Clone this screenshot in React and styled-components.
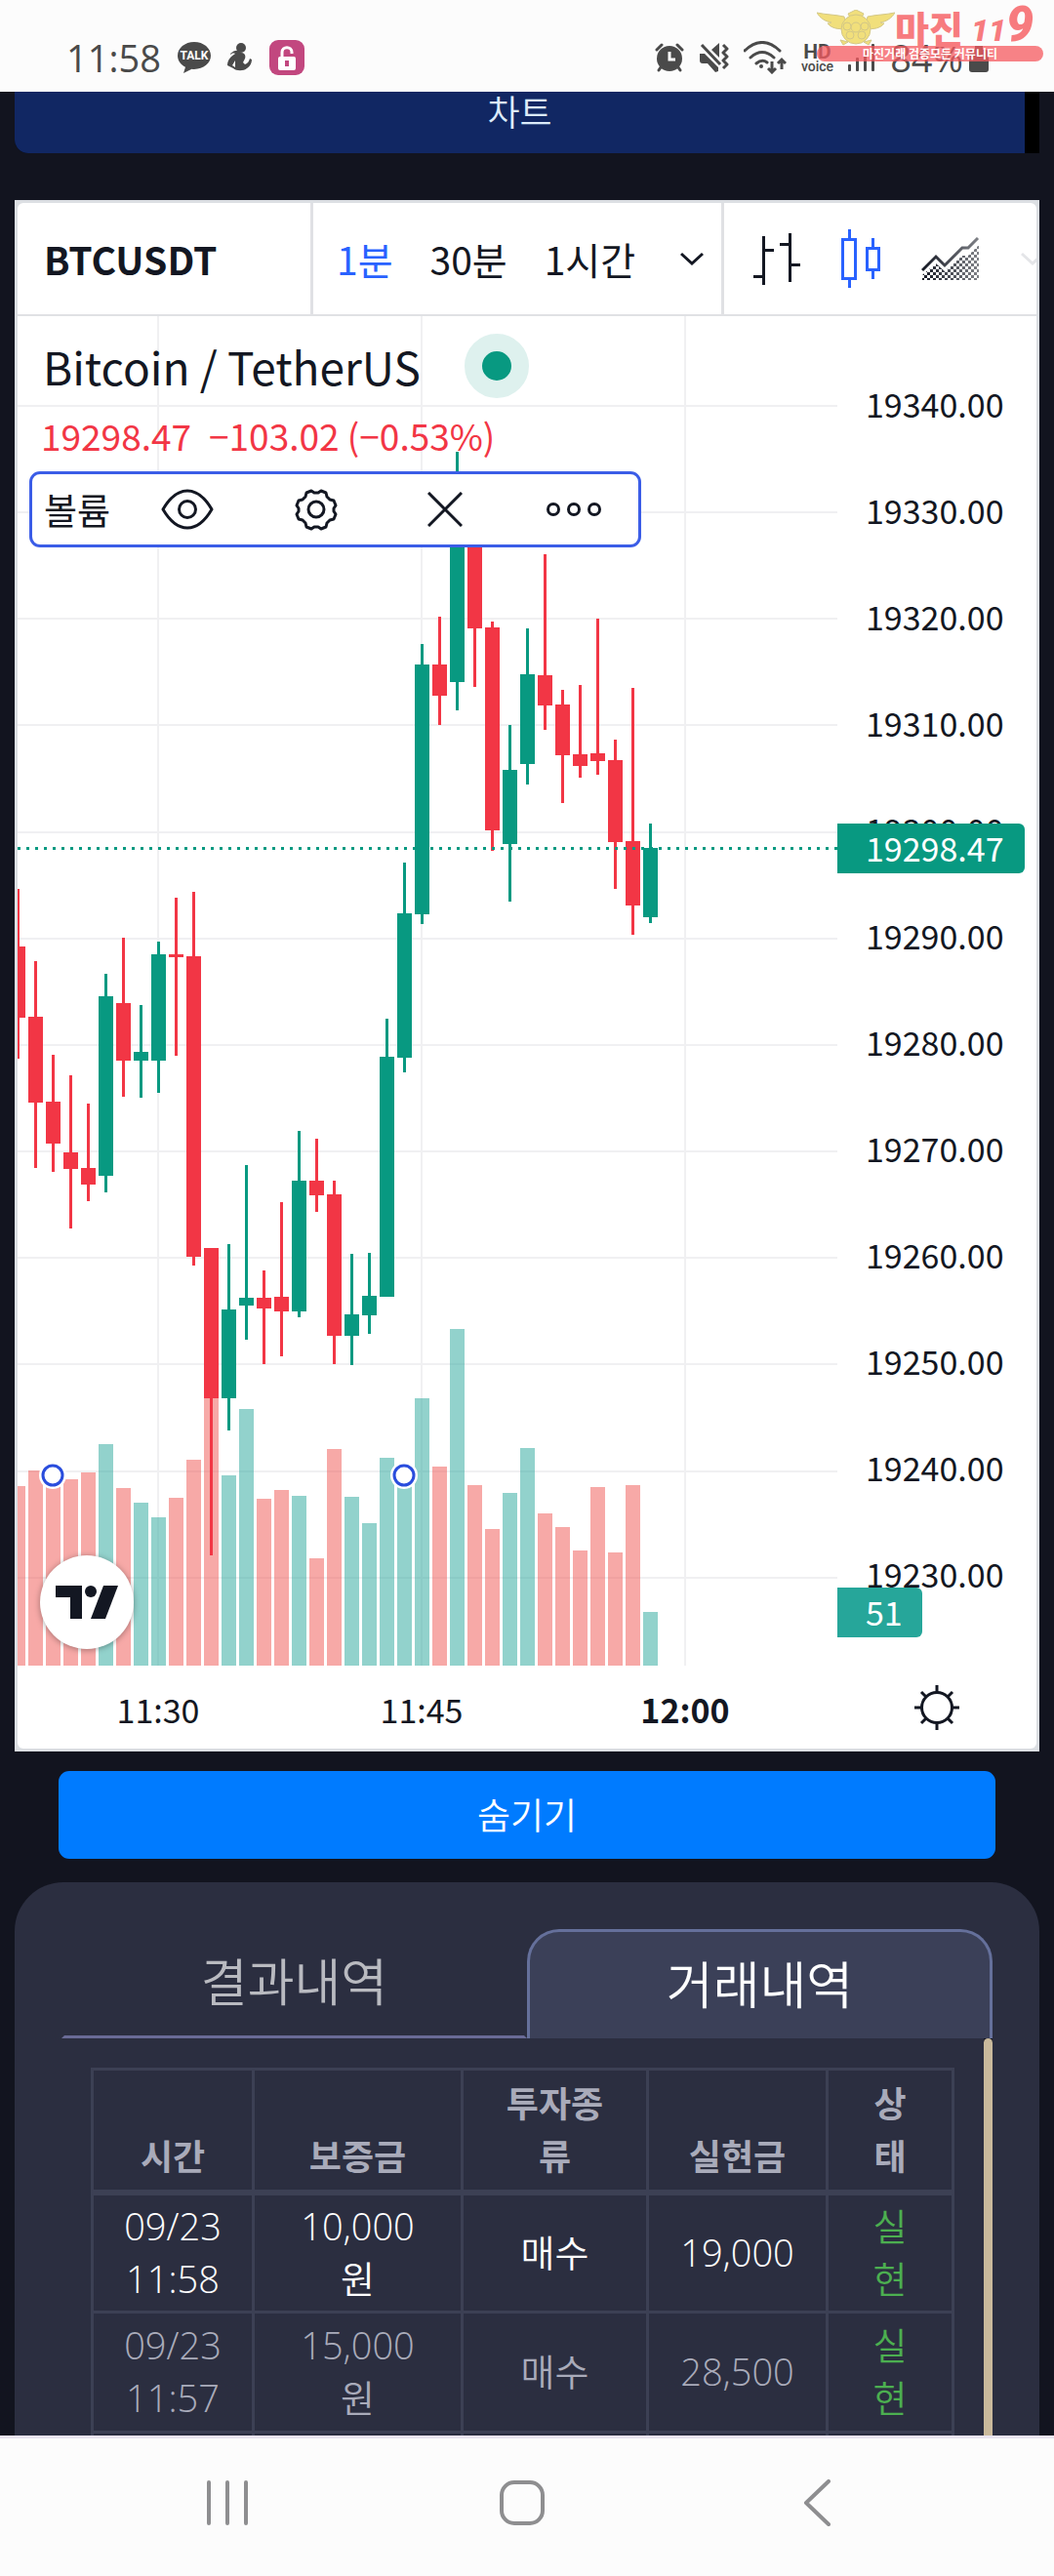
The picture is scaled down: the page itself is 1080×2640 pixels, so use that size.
import React, { useState } from "react";

//styled-components
import styled, { createGlobalStyle } from "styled-components";

const GREEN = "#089981";
const RED = "#f23645";

//Chart data, in plot pixels: [up, high, bodyTop, bodyBottom, low, volumeTop]
const candles = [
  [0, 587, 646, 719, 761, 1199],
  [0, 661, 718, 806, 873, 1183],
  [0, 757, 805, 848, 877, 1189],
  [0, 778, 857, 874, 935, 1192],
  [0, 807, 873, 890, 907, 1185],
  [1, 674, 697, 881, 898, 1156],
  [0, 637, 704, 763, 800, 1201],
  [1, 706, 754, 763, 801, 1216],
  [1, 641, 654, 763, 796, 1231],
  [0, 596, 654, 657, 758, 1211],
  [0, 590, 656, 964, 973, 1172],
  [0, 955, 955, 1109, 1270, 1109],
  [1, 951, 1018, 1109, 1142, 1188],
  [1, 870, 1006, 1014, 1049, 1120],
  [0, 978, 1006, 1017, 1074, 1212],
  [0, 908, 1005, 1020, 1066, 1203],
  [1, 835, 886, 1020, 1026, 1209],
  [0, 843, 886, 901, 918, 1273],
  [0, 886, 900, 1045, 1074, 1161],
  [1, 961, 1023, 1045, 1075, 1210],
  [1, 960, 1004, 1024, 1043, 1237],
  [1, 720, 759, 1005, 1005, 1170],
  [1, 560, 612, 760, 775, 1189],
  [1, 336, 357, 613, 623, 1109],
  [0, 308, 357, 389, 419, 1179],
  [1, 139, 210, 375, 404, 1038],
  [0, 190, 200, 320, 380, 1198],
  [0, 313, 319, 527, 548, 1243],
  [1, 419, 465, 541, 600, 1206],
  [1, 320, 367, 459, 480, 1160],
  [0, 244, 368, 399, 424, 1227],
  [0, 383, 398, 450, 499, 1241],
  [0, 378, 449, 461, 473, 1265],
  [0, 310, 448, 456, 470, 1200],
  [0, 434, 455, 539, 587, 1267],
  [0, 381, 538, 604, 634, 1198],
  [1, 520, 545, 616, 622, 1328],
];

const prices = [
  "19340.00",
  "19330.00",
  "19320.00",
  "19310.00",
  "19300.00",
  "19290.00",
  "19280.00",
  "19270.00",
  "19260.00",
  "19250.00",
  "19240.00",
  "19230.00",
];

const trades = [
  { day: "09/23", time: "11:58", deposit: "10,000", kind: "매수", profit: "19,000", state: "실현" },
  { day: "09/23", time: "11:57", deposit: "15,000", kind: "매수", profit: "28,500", state: "실현" },
];

const Plot = () => (
  <PlotSvg viewBox="0 0 840 1383" preserveAspectRatio="xMaxYMin slice">
    {prices.map((price, i) => (
      <rect key={price} x="0" y={91 + Math.round(i * 109.15)} width="840" height="2" fill="#f0f0f2" />
    ))}
    {[143, 413, 683].map((x) => (
      <rect key={x} x={x} y="0" width="2" height="1383" fill="#f0f0f2" />
    ))}
    {candles.map(([up, , , , , top], i) => (
      <rect
        key={i}
        x={i * 18 - 7}
        y={top}
        width="15"
        height={1383 - top}
        fill={up ? "#26a69a" : "#ef5350"}
        opacity="0.5"
      />
    ))}
    {candles.map(([up, high, top, bottom, low], i) => (
      <g key={i} fill={up ? GREEN : RED}>
        <rect x={i * 18 - 1} y={high} width="3" height={low - high} />
        <rect x={i * 18 - 7} y={top} width="15" height={bottom - top} />
      </g>
    ))}
    <path d="M0 545.5H840" stroke={GREEN} strokeWidth="3" strokeDasharray="3 6" />
    {[36, 396].map((x) => (
      <g key={x}>
        <circle cx={x} cy="1188" r="14" fill="#fff" />
        <circle cx={x} cy="1188" r="10" fill="#fff" stroke="#2a4ddd" strokeWidth="3" />
      </g>
    ))}
  </PlotSvg>
);

const StatusBar = () => (
  <Status>
    <Clock>11:58</Clock>
    <svg width="34" height="32" viewBox="0 0 34 32">
      <path
        d="M17 0C7.500 0 0 6.300 0 14c0 5 3 9.300 8 11.800L6 32l8.500-4.300c.8.1 1.700.2 2.500.2 9.500 0 17-6.200 17-13.900S26.500 0 17 0z"
        fill="#4a4a4a"
      />
      <text x="17" y="18" textAnchor="middle" fontSize="12" fontWeight="700" fontFamily="Roboto, sans-serif" fill="#fff">
        TALK
      </text>
    </svg>
    <svg width="26" height="30" viewBox="0 0 26 30" fill="#4a4a4a">
      <circle cx="14" cy="5" r="5" />
      <path d="M3 11c3-3 6-4 9-3l2 2c4 0 5 3 4 6l-2 4 2 2c3-1 4-3 5-6l2 1c0 4-2 7-5 9-3 3-11 3-14 0l-6-3c0-5 3-9 8-12-2-1-4 0-5 1z" />
      <path d="M8 18l-3 5 3 2z" fill="#fff" />
    </svg>
    <LockBadge>
      <svg width="20" height="25" viewBox="0 0 20 25">
        <path d="M5 12V6.500C5 0 15 0 15 6.500V8" fill="none" stroke="#fff" strokeWidth="3" />
        <rect x="1" y="11" width="18" height="14" rx="2" fill="#fff" />
        <rect x="8" y="15" width="4" height="6" fill="#c2477f" />
      </svg>
    </LockBadge>
    <StatusRight>
      <svg width="30" height="30" viewBox="0 0 30 30">
        <g stroke="#4a4a4a" strokeWidth="3" strokeLinecap="round">
          <path d="M2 7l5-5M28 7l-5-5M6 25l-2 3M24 25l2 3" />
        </g>
        <circle cx="15" cy="16" r="13" fill="#4a4a4a" />
        <path d="M15 9v8h6" fill="none" stroke="#fff" strokeWidth="3" />
      </svg>
      <svg width="31" height="30" viewBox="0 0 31 30">
        <path d="M1 11h5L20 25v4l-3 1-8-9H4c-2 0-3-1-3-3zM13 7l8-7v15z" fill="#4a4a4a" />
        <path
          d="M3 2l19 20M25 2l4 4-4 4 4 4-4 4 4 4-4 4"
          fill="none"
          stroke="#4a4a4a"
          strokeWidth="3"
          strokeLinejoin="round"
        />
      </svg>
      <svg width="44" height="34" viewBox="0 0 44 34" fill="none" stroke="#4a4a4a" strokeWidth="3">
        <path d="M1 10Q19-7 37 10M7 17q12-11 24 0M13 23q6-5 11-1" strokeLinecap="round" />
        <circle cx="18" cy="26" r="2" fill="#4a4a4a" stroke="none" />
        <path d="M29 21v10M25 28l4 4 4-4M39 29V19M35 23l4-4 4 4" />
      </svg>
      <HdVoice>
        <b>HD</b>
        <span>voice</span>
      </HdVoice>
      <svg width="28" height="28" viewBox="0 0 28 28" fill="#4a4a4a">
        <rect x="0" y="21" width="3" height="7" rx="1" />
        <rect x="8" y="14" width="3" height="14" rx="1" />
        <rect x="16" y="7" width="3" height="21" rx="1" />
        <rect x="24" y="0" width="3" height="28" rx="1" />
      </svg>
      <Charge>
        84%
        <svg width="20" height="30" viewBox="0 0 20 30" fill="#4a4a4a">
          <rect x="6" y="3" width="8" height="5" />
          <rect x="0" y="7" width="20" height="23" rx="3" />
        </svg>
      </Charge>
    </StatusRight>
    <Watermark>
      <WatermarkTop>
        <svg width="80" height="37" viewBox="0 0 80 37">
          <g fill="#f0dc6e" stroke="#cfc27a" strokeWidth="1" opacity="0.9">
            <path d="M0 3c9 2 19 2 28 4l3 12c-10 2-17-1-20-5 3 0 4-1 4-1-7-1-12-5-15-10z" />
            <path d="M80 3c-9 2-19 2-28 4l-3 12c10 2 17-1 20-5-3 0-4-1-4-1 7-1 12-5 15-10z" />
            <path d="M32 4l8-4 8 4-3 6H35z" />
            <circle cx="40" cy="20" r="15" />
            <circle cx="40" cy="18" r="5" />
            <circle cx="31" cy="17" r="4" />
            <circle cx="49" cy="17" r="4" />
            <circle cx="34" cy="26" r="4" />
            <circle cx="46" cy="26" r="4" />
            <path d="M24 31l8 2-5 3zM56 31l-8 2 5 3z" />
          </g>
        </svg>
        <WatermarkName>마진</WatermarkName>
        <WatermarkNumber>
          11<big>9</big>
        </WatermarkNumber>
      </WatermarkTop>
      <WatermarkBar>마진거래 검증모든 커뮤니티</WatermarkBar>
    </Watermark>
  </Status>
);

const Chevron = () => (
  <svg width="24" height="14" viewBox="0 0 24 14" fill="none" stroke="currentColor" strokeWidth="3">
    <path d="M1 2l11 10L23 2" />
  </svg>
);

const ChartWidget = () => {
  const [period, setPeriod] = useState("1분");

  return (
    <Widget>
      <Toolbar>
        <SymbolButton>BTCUSDT</SymbolButton>
        <Intervals>
          {["1분", "30분", "1시간"].map((name) => (
            <IntervalButton key={name} $active={name === period} onClick={() => setPeriod(name)}>
              {name}
            </IntervalButton>
          ))}
          <MoreButton aria-label="시간 간격">
            <Chevron />
          </MoreButton>
        </Intervals>
        <ChartStyles>
          <StyleButton aria-label="바">
            <svg width="48" height="54" viewBox="0 0 48 54" fill="none" stroke="#131722" strokeWidth="3">
              <path d="M10.500 4v50M10.500 18.500H21M0 45.500h10.500M37.500 1v50M27 12.500h10.500M37.500 33.500H48" />
            </svg>
          </StyleButton>
          <StyleButton aria-label="캔들">
            <svg width="40" height="60" viewBox="0 0 40 60" fill="none" stroke="#2962ff" strokeWidth="3">
              <path d="M8.500 0v10M8.500 50v10M1.500 10.500h13v40h-13zM32.500 9v10M32.500 41v10M26.500 19.500h12v22h-12z" />
            </svg>
          </StyleButton>
          <StyleButton aria-label="영역">
            <svg width="60" height="44" viewBox="0 0 60 44">
              <defs>
                <pattern id="dots" width="6" height="6" patternUnits="userSpaceOnUse">
                  <rect width="3" height="3" fill="#131722" />
                  <rect x="3" y="3" width="3" height="3" fill="#131722" />
                </pattern>
                <linearGradient id="fade">
                  <stop offset="0" stopColor="#fff" />
                  <stop offset="1" stopColor="#888" />
                </linearGradient>
                <mask id="fadeMask">
                  <rect width="60" height="44" fill="url(#fade)" />
                </mask>
              </defs>
              <g mask="url(#fadeMask)">
                <path d="M1 44v-5l14-12 9 8 18-16h6l11-11v36z" fill="url(#dots)" />
                <path d="M1 34l14-14 9 9 18-18h6L58 1" fill="none" stroke="#131722" strokeWidth="3" />
              </g>
            </svg>
          </StyleButton>
          <FadedMore aria-label="차트 유형">
            <Chevron />
          </FadedMore>
        </ChartStyles>
      </Toolbar>
      <ChartBody>
        <PlotArea>
          <Plot />
          <Legend>
            <TitleLine>
              Bitcoin / TetherUS
              <Pulse />
            </TitleLine>
            <PriceLine>
              <span>19298.47</span>
              <span>−103.02 (−0.53%)</span>
            </PriceLine>
            <VolumeBox>
              <VolumeName>볼륨</VolumeName>
              <VolumeButton aria-label="숨기기">
                <svg width="54" height="42" viewBox="0 0 54 42" fill="none" stroke="#131722" strokeWidth="3">
                  <path d="M2 21C9 9 17 2 27 2s18 7 25 19c-7 12-15 19-25 19S9 33 2 21z" strokeLinejoin="round" />
                  <circle cx="27" cy="21" r="8.500" />
                </svg>
              </VolumeButton>
              <VolumeButton aria-label="설정">
                <svg width="44" height="44" viewBox="0 0 44 44" fill="none" stroke="#131722" strokeWidth="3">
                  <path
                    strokeLinejoin="round"
                    d="M17 3l3 2h4l3-2 5 2 1 4 3 3 4 1 2 5-2 3v3l2 3-2 5-4 1-3 3-1 4-5 2-3-2h-4l-3 2-5-2-1-4-3-3-4-1-2-5 2-3v-3l-2-3 2-5 4-1 3-3 1-4z"
                  />
                  <circle cx="22" cy="22" r="8" />
                </svg>
              </VolumeButton>
              <VolumeButton aria-label="삭제">
                <svg width="36" height="36" viewBox="0 0 36 36" stroke="#131722" strokeWidth="3">
                  <path d="M1 1l34 34M35 1L1 35" />
                </svg>
              </VolumeButton>
              <VolumeButton aria-label="더보기">
                <svg width="58" height="16" viewBox="0 0 58 16" fill="none" stroke="#131722" strokeWidth="3">
                  <circle cx="8" cy="8" r="5.500" />
                  <circle cx="29" cy="8" r="5.500" />
                  <circle cx="50" cy="8" r="5.500" />
                </svg>
              </VolumeButton>
            </VolumeBox>
          </Legend>
          <LogoLink href="#tradingview" aria-label="TradingView">
            <svg width="64" height="34" viewBox="0 0 64 34" fill="#131722">
              <path d="M0 0h27v34H15V12H0z" />
              <circle cx="36" cy="6" r="6" />
              <path d="M49 0h15L51 34H36z" />
            </svg>
          </LogoLink>
        </PlotArea>
        <PriceAxis>
          {prices.map((price) => (
            <PriceLabel key={price}>{price}</PriceLabel>
          ))}
          <LastPrice>19298.47</LastPrice>
          <LastVolume>51</LastVolume>
        </PriceAxis>
      </ChartBody>
      <TimeAxis>
        <TimeLabels>
          <TimeLabel>11:30</TimeLabel>
          <TimeLabel>11:45</TimeLabel>
          <TimeLabel $bold>12:00</TimeLabel>
        </TimeLabels>
        <AxisSettings aria-label="축 설정">
          <svg width="46" height="46" viewBox="0 0 46 46" fill="none" stroke="#131722" strokeWidth="3">
            <circle cx="23" cy="23" r="15.500" />
            <path d="M23 0v7M23 39v7M0 23h7M39 23h7M7 7l5 5M34 34l5 5M39 7l-5 5M12 34l-5 5" />
          </svg>
        </AxisSettings>
      </TimeAxis>
    </Widget>
  );
};

const History = () => {
  const [tab, setTab] = useState("거래내역");

  return (
    <Panel>
      <Tabs>
        {["결과내역", "거래내역"].map((name) => (
          <Tab key={name} $active={name === tab} onClick={() => setTab(name)}>
            {name}
          </Tab>
        ))}
      </Tabs>
      <ScrollArea>
        <TableWrap>
          <Table>
            <colgroup>
              <col width="165" />
              <col width="214" />
              <col width="190" />
              <col width="184" />
              <col width="129" />
            </colgroup>
            <thead>
              <tr>
                <th>시간</th>
                <th>보증금</th>
                <th>투자종류</th>
                <th>실현금</th>
                <th>상태</th>
              </tr>
            </thead>
            <tbody>
              {trades.map((trade, i) => (
                <Row key={trade.time} $dim={i % 2 === 1}>
                  <td>
                    {trade.day} {trade.time}
                  </td>
                  <td>
                    {trade.deposit}
                    <br />원
                  </td>
                  <td>{trade.kind}</td>
                  <td>{trade.profit}</td>
                  <Done>{trade.state}</Done>
                </Row>
              ))}
              <Row>
                <td />
                <td />
                <td />
                <td />
                <td />
              </Row>
            </tbody>
          </Table>
        </TableWrap>
        <ScrollTrack>
          <ScrollThumb />
        </ScrollTrack>
      </ScrollArea>
    </Panel>
  );
};

const App = () => (
  <Shell>
    <GlobalStyle />
    <StatusBar />
    <Page>
      <ChartTabFrame>
        <ChartTab>차트</ChartTab>
      </ChartTabFrame>
      <ChartWidget />
      <HideButton>숨기기</HideButton>
      <History />
    </Page>
    <NavBar>
      <NavButton aria-label="최근 앱">
        <svg width="44" height="46" viewBox="0 0 44 46" stroke="#8e8e90" strokeWidth="4" strokeLinecap="round">
          <path d="M3 2v42M22 2v42M41 2v42" />
        </svg>
      </NavButton>
      <NavButton aria-label="홈">
        <svg width="48" height="48" viewBox="0 0 48 48" fill="none" stroke="#8e8e90" strokeWidth="4">
          <rect x="3" y="3" width="42" height="42" rx="13" />
        </svg>
      </NavButton>
      <NavButton aria-label="뒤로">
        <svg width="28" height="48" viewBox="0 0 28 48" fill="none" stroke="#8e8e90" strokeWidth="4">
          <path d="M26 2L3 24l23 22" strokeLinecap="round" strokeLinejoin="round" />
        </svg>
      </NavButton>
    </NavBar>
  </Shell>
);

const GlobalStyle = createGlobalStyle`
  * {
    box-sizing: border-box;
  }

  body {
    margin: 0;
    background: #12141f;
    font-family: "Noto Sans CJK KR", sans-serif;
  }

  button {
    margin: 0;
    padding: 0;
    border: none;
    background: none;
    font: inherit;
    color: inherit;
    cursor: pointer;
  }

  svg {
    display: block;
    flex: none;
  }
`;

const Shell = styled.div`
  display: flex;
  flex-direction: column;
  height: 100vh;
`;

const Status = styled.header`
  position: relative;
  display: flex;
  align-items: center;
  flex: none;
  gap: 17px;
  height: 94px;
  padding: 24px 67px 0 68px;
  background: #fcfcfc;
  color: #4a4a4a;
  font-family: "Open Sans", sans-serif;
  font-size: 38px;
  line-height: 48px;
`;

const Clock = styled.span`
  font-weight: 400;
`;

const LockBadge = styled.span`
  display: flex;
  align-items: center;
  justify-content: center;
  width: 36px;
  height: 36px;
  border-radius: 9px;
  background: #c2477f;
`;

const StatusRight = styled.div`
  display: flex;
  align-items: center;
  gap: 15px;
  margin-left: auto;
`;

const HdVoice = styled.span`
  display: flex;
  flex-direction: column;
  align-items: center;
  font-family: Roboto, sans-serif;
  font-size: 14px;
  font-weight: 500;
  line-height: 12px;

  b {
    font-size: 21px;
    line-height: 17px;
  }
`;

const Charge = styled.span`
  display: flex;
  align-items: center;
  gap: 6px;
`;

const Watermark = styled.div`
  position: absolute;
  top: 9px;
  right: 11px;
  width: 232px;
`;

const WatermarkTop = styled.div`
  display: flex;
  align-items: center;
  height: 38px;
`;

const WatermarkName = styled.b`
  color: #f77b7e;
  font-family: "Noto Sans CJK KR", sans-serif;
  font-size: 38px;
  font-weight: 900;
  line-height: 38px;
`;

const WatermarkNumber = styled.b`
  padding-left: 8px;
  color: #f77b7e;
  font-family: Roboto, sans-serif;
  font-size: 32px;
  font-style: italic;
  font-weight: 900;
  line-height: 38px;

  big {
    font-size: 50px;
    line-height: 38px;
  }
`;

const WatermarkBar = styled.div`
  height: 16px;
  border-radius: 8px;
  background: rgba(245, 90, 95, 0.75);
  color: #fff;
  font-family: "Noto Sans CJK KR", sans-serif;
  font-size: 12px;
  font-weight: 700;
  line-height: 16px;
  text-align: center;
`;

const Page = styled.main`
  flex: 1;
  min-height: 0;
  overflow: hidden;
  padding: 0 15px;
  background: #12141f;
`;

const ChartTabFrame = styled.div`
  padding-right: 15px;
  border-radius: 0 0 0 14px;
  background: #000;
`;

const ChartTab = styled.button`
  display: block;
  width: 100%;
  height: 63px;
  padding-bottom: 25px;
  border-radius: 0 0 0 14px;
  background: #112763;
  color: #dcebfa;
  font-size: 36px;
  font-weight: 350;
  line-height: 38px;
`;

const Widget = styled.section`
  margin-top: 48px;
  padding: 3px;
  background: #dcdfe3;
  color: #131722;
`;

const Toolbar = styled.div`
  display: flex;
  height: 116px;
  border-bottom: 2px solid #e0e1e4;
  border-radius: 6px 6px 0 0;
  background: #fff;
  font-size: 39px;
`;

const SymbolButton = styled.button`
  width: 303px;
  padding-left: 27px;
  border-right: 3px solid #e0e1e4;
  font-weight: 700;
  text-align: left;
`;

const Intervals = styled.div`
  display: flex;
  align-items: center;
  flex: 1;
  gap: 38px;
  padding: 0 18px 0 24px;
  border-right: 3px solid #e0e1e4;
`;

const IntervalButton = styled.button`
  color: ${(props) => (props.$active ? "#2962ff" : "#131722")};
`;

const MoreButton = styled.button`
  margin-left: auto;
`;

const ChartStyles = styled.div`
  display: flex;
  align-items: center;
  gap: 42px;
  width: 320px;
  padding-left: 30px;
  overflow: hidden;
`;

const StyleButton = styled.button`
  flex: none;
`;

const FadedMore = styled.button`
  flex: none;
  color: #e4e5e8;
`;

const ChartBody = styled.div`
  display: flex;
  background: #fff;
`;

const PlotArea = styled.div`
  position: relative;
  flex: 1;
  min-width: 0;
`;

const PlotSvg = styled.svg`
  width: 100%;
  height: 1383px;
`;

const Legend = styled.div`
  position: absolute;
  top: 26px;
  left: 12px;
`;

const TitleLine = styled.div`
  display: flex;
  align-items: center;
  gap: 45px;
  padding-left: 14px;
  font-size: 46px;
  line-height: 50px;
`;

const Pulse = styled.span`
  width: 66px;
  height: 66px;
  margin: -8px 0;
  border: 18px solid #def1ee;
  border-radius: 50%;
  background: ${GREEN};
`;

const PriceLine = styled.div`
  display: flex;
  gap: 18px;
  margin-top: 21px;
  padding-left: 12px;
  color: ${RED};
  font-size: 37px;
  line-height: 50px;
`;

const VolumeBox = styled.div`
  display: flex;
  align-items: center;
  width: 627px;
  height: 78px;
  margin-top: 12px;
  border: 3px solid #3b5de7;
  border-radius: 11px;
  background: #fff;
`;

const VolumeName = styled.span`
  flex: 1;
  padding-left: 12px;
  font-size: 37px;
`;

const VolumeButton = styled.button`
  display: flex;
  align-items: center;
  justify-content: center;
  width: 132px;
  height: 72px;
`;

const LogoLink = styled.a`
  position: absolute;
  bottom: 17px;
  left: 23px;
  display: flex;
  align-items: center;
  justify-content: center;
  width: 96px;
  height: 96px;
  border-radius: 50%;
  background: #fff;
  box-shadow: 0 1px 6px rgba(0, 0, 0, 0.35);
`;

const PriceAxis = styled.div`
  position: relative;
  width: 204px;
  padding: 35px 0 0 29px;
  font-size: 34px;
`;

const PriceLabel = styled.div`
  height: 109px;
  line-height: 109px;
`;

const AxisBadge = styled.div`
  position: absolute;
  left: 0;
  height: 51px;
  padding-left: 29px;
  border-radius: 0 6px 6px 0;
  color: #fff;
  line-height: 49px;
`;

const LastPrice = styled(AxisBadge)`
  top: 520px;
  width: 192px;
  background: ${GREEN};
`;

const LastVolume = styled(AxisBadge)`
  top: 1303px;
  width: 87px;
  background: #26a69a;
`;

const TimeAxis = styled.div`
  display: flex;
  align-items: center;
  height: 85px;
  border-radius: 0 0 6px 6px;
  background: #fff;
`;

const TimeLabels = styled.div`
  display: flex;
  justify-content: flex-end;
  flex: 1;
  padding: 4px 21px 0 0;
`;

const TimeLabel = styled.span`
  width: 270px;
  font-size: 34px;
  font-weight: ${(props) => (props.$bold ? 700 : 400)};
  text-align: center;
`;

const AxisSettings = styled.button`
  display: flex;
  justify-content: center;
  width: 204px;
`;

const HideButton = styled.button`
  display: block;
  width: calc(100% - 90px);
  height: 90px;
  margin: 20px 45px 24px;
  padding-bottom: 3px;
  border-radius: 11px;
  background: #007bff;
  color: #fff;
  font-size: 37px;
  font-weight: 350;
`;

const Panel = styled.section`
  padding: 48px 48px 0;
  border-radius: 50px 50px 0 0;
  background: #2b2e40;
`;

const Tabs = styled.div`
  display: flex;
  height: 112px;
`;

const Tab = styled.button`
  flex: 1;
  padding-bottom: ${(props) => (props.$active ? "6px" : "9px")};
  border: 3px solid ${(props) => (props.$active ? "#65709b" : "transparent")};
  border-bottom: ${(props) => (props.$active ? "none" : "3px solid #6a6b97")};
  border-radius: ${(props) => (props.$active ? "33px 33px 0 0" : "0")};
  background: ${(props) => (props.$active ? "#3b4058" : "none")};
  color: ${(props) => (props.$active ? "#fff" : "#b9bac0")};
  font-size: 52px;
  font-weight: 350;
`;

const ScrollArea = styled.div`
  display: flex;
`;

const TableWrap = styled.div`
  flex: 1;
  padding: 30px;
`;

const ScrollTrack = styled.div`
  width: 12px;
  background: #12141f;
`;

const ScrollThumb = styled.div`
  height: 100%;
  border-radius: 6px;
  background: #c9b99c;
`;

const Table = styled.table`
  width: 100%;
  border-collapse: collapse;
  table-layout: fixed;
  font-size: 36px;
  line-height: 54px;
  text-align: center;

  th,
  td {
    height: 123px;
    padding: 4px 29px 6px;
    border: 3px solid #3c4054;
    word-break: break-all;
  }

  th {
    height: 126px;
    padding: 3px 32px 9px;
    border-bottom-width: 6px;
    color: #a9abba;
    font-weight: 700;
    vertical-align: bottom;
  }
`;

const Row = styled.tr`
  color: ${(props) => (props.$dim ? "#a9abba" : "#fff")};
  font-family: "Open Sans", "Noto Sans CJK KR", sans-serif;
  font-size: 38px;
  font-weight: 350;
`;

const Done = styled.td`
  color: #4caf50;
`;

const NavBar = styled.nav`
  display: flex;
  align-items: center;
  justify-content: space-around;
  flex: none;
  height: 144px;
  padding: 0 92px 9px 82px;
  border-top: 3px solid #e9e4f0;
  background: #fcfcfc;
`;

const NavButton = styled.button`
  display: flex;
  justify-content: center;
  width: 120px;
`;

export default App;
